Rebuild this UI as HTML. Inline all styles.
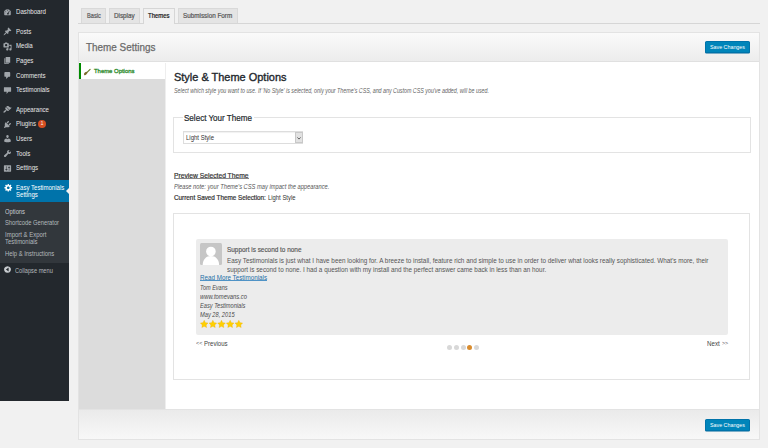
<!DOCTYPE html>
<html><head><meta charset="utf-8">
<style>
*{margin:0;padding:0;box-sizing:border-box}
html,body{width:768px;height:448px;overflow:hidden;background:#f1f1f1;font-family:"Liberation Sans",sans-serif}
.a{position:absolute}
.t{position:absolute;white-space:nowrap;line-height:0;transform-origin:0 0}
.ic{position:absolute;left:3.2px;width:9px;height:9px;fill:#a0a5aa}
</style></head><body>

<div class="a" style="left:0px;top:0px;width:69px;height:401px;background:#23282d"></div>
<div class="t" style="left:15.8px;top:12.00px;font-size:6.8px;color:#e6e6e6;transform:scaleX(0.9)">Dashboard</div>
<div class="t" style="left:15.8px;top:32.00px;font-size:6.8px;color:#e6e6e6;transform:scaleX(0.9)">Posts</div>
<div class="t" style="left:15.8px;top:46.00px;font-size:6.8px;color:#e6e6e6;transform:scaleX(0.9)">Media</div>
<div class="t" style="left:15.8px;top:61.00px;font-size:6.8px;color:#e6e6e6;transform:scaleX(0.9)">Pages</div>
<div class="t" style="left:15.8px;top:76.00px;font-size:6.8px;color:#e6e6e6;transform:scaleX(0.9)">Comments</div>
<div class="t" style="left:15.8px;top:90.00px;font-size:6.8px;color:#e6e6e6;transform:scaleX(0.9)">Testimonials</div>
<div class="t" style="left:15.8px;top:110.00px;font-size:6.8px;color:#e6e6e6;transform:scaleX(0.9)">Appearance</div>
<div class="t" style="left:15.8px;top:124.00px;font-size:6.8px;color:#e6e6e6;transform:scaleX(0.9)">Plugins</div>
<div class="t" style="left:15.8px;top:139.00px;font-size:6.8px;color:#e6e6e6;transform:scaleX(0.9)">Users</div>
<div class="t" style="left:15.8px;top:154.00px;font-size:6.8px;color:#e6e6e6;transform:scaleX(0.9)">Tools</div>
<div class="t" style="left:15.8px;top:168.00px;font-size:6.8px;color:#e6e6e6;transform:scaleX(0.9)">Settings</div>
<svg class="ic" style="top:7.5px" viewBox="0 0 20 20"><path fill-rule="evenodd" d="M3.76 16h12.48c1.1-1.37 1.76-3.11 1.76-5 0-4.42-3.58-8-8-8s-8 3.58-8 8c0 1.89.66 3.63 1.76 5zM10 4c.55 0 1 .45 1 1s-.45 1-1 1-1-.45-1-1 .45-1 1-1zM6 6c.55 0 1 .45 1 1s-.45 1-1 1-1-.45-1-1 .45-1 1-1zm8.69.75l-2.14 4.71c.28.33.45.76.45 1.24 0 1.1-.9 2-2 2s-2-.9-2-2 .9-2 2-2c.13 0 .26.01.38.04l2.14-4.71c.27-.27.71-.27.98 0 .28.27.28.71.19.72zM4 10c.55 0 1 .45 1 1s-.45 1-1 1-1-.45-1-1 .45-1 1-1zm12 0c.55 0 1 .45 1 1s-.45 1-1 1-1-.45-1-1 .45-1 1-1z"/></svg>
<svg class="ic" style="top:27.0px" viewBox="0 0 20 20"><path d="M10.44 3.02l1.82-1.82 6.36 6.35-1.83 1.82c-1.05-.68-2.48-.57-3.41.36l-.75.75c-.92.93-1.04 2.35-.35 3.41l-1.83 1.82-2.41-2.41-2.8 2.79c-.42.42-3.38 2.71-3.8 2.29s1.86-3.39 2.28-3.81l2.79-2.79L4.1 9.36l1.83-1.82c1.05.69 2.48.57 3.4-.36l.75-.75c.93-.92 1.05-2.35.36-3.41z"/></svg>
<svg class="ic" style="top:41.6px" viewBox="0 0 20 20"><path fill-rule="evenodd" d="M13 11V4c0-.55-.45-1-1-1h-1.67L9 1H5L3.67 3H2c-.55 0-1 .45-1 1v7c0 .55.45 1 1 1h10c.55 0 1-.45 1-1zM7 4.5c1.38 0 2.5 1.12 2.5 2.5S8.38 9.5 7 9.5 4.5 8.38 4.5 7 5.62 4.5 7 4.5zM14 6h5v10.5c0 1.38-1.12 2.5-2.5 2.5S14 17.88 14 16.5s1.12-2.5 2.5-2.5c.17 0 .34.02.5.05V9h-3V6zm-4 8.05V13h2v3.5c0 1.38-1.12 2.5-2.5 2.5S7 17.880 7 16.5 8.12 14 9.5 14c.17 0 .34.02.5.05z"/></svg>
<svg class="ic" style="top:56.2px" viewBox="0 0 20 20"><path d="M6 15V2h10v13H6zm-1 1h8v2H3V5h2v11z"/></svg>
<svg class="ic" style="top:70.9px" viewBox="0 0 20 20"><path d="M5 2h9c1.1 0 2 .9 2 2v7c0 1.1-.9 2-2 2h-2l-5 5v-5H5c-1.1 0-2-.9-2-2V4c0-1.1.9-2 2-2z"/></svg>
<svg class="ic" style="top:85.5px" viewBox="0 0 20 20"><path d="M3 3h14c.6 0 1 .4 1 1v8c0 .6-.4 1-1 1h-5l-4 5v-5H3c-.6 0-1-.4-1-1V4c0-.6.4-1 1-1z"/></svg>
<svg class="ic" style="top:105.0px" viewBox="0 0 20 20"><path d="M14.48 11.06L7.41 3.99l1.5-1.5c.5-.56 2.3-.47 3.51.32 1.21.8 1.43 1.28 2.91 2.1 1.18.64 2.45 1.26 4.45.85zm-.71.71L6.7 4.7 4.93 6.47c-.39.39-.39 1.02 0 1.41l1.06 1.06c.39.39.39 1.03 0 1.42-.6.6-1.43 1.11-2.21 1.690-.35.26-.7.53-1.01.84C1.43 14.23.4 16.08 1.2 16.89c.8.8 2.66-.23 4.02-1.58.31-.31.58-.66.85-1.02.57-.78 1.08-1.61 1.69-2.21.39-.39 1.02-.39 1.41 0l1.06 1.06c.39.39 1.02.39 1.41 0z"/></svg>
<svg class="ic" style="top:119.6px" viewBox="0 0 20 20"><path d="M13.11 4.36L9.87 7.6 8 5.73l3.24-3.24c.35-.34 1.05-.2 1.56.32.52.51.66 1.21.31 1.55zm-8 1.77l.91-1.12 9.01 9.01-1.19.84c-.71.71-2.63 1.16-3.82 1.16H6.14L4.9 17.26c-.59.59-1.54.59-2.12 0-.59-.58-.59-1.53 0-2.12l1.24-1.24v-3.88c0-1.13.4-3.19 1.09-3.89zm7.26 3.97l3.24-3.24c.34-.35 1.04-.21 1.55.31.52.51.66 1.21.31 1.55l-3.24 3.25z"/></svg>
<svg class="ic" style="top:134.2px" viewBox="0 0 20 20"><path d="M10 9.25c-2.27 0-2.73-3.44-2.73-3.44C7 4.02 7.82 2 9.97 2c2.16 0 2.98 2.02 2.71 3.81 0 0-.41 3.44-2.68 3.44zm0 2.57L12.72 10c2.39 0 4.52 2.33 4.52 4.53v2.49s-3.65 1.13-7.24 1.13c-3.65 0-7.24-1.13-7.24-1.130v-2.49c0-2.25 1.94-4.48 4.47-4.48z"/></svg>
<svg class="ic" style="top:148.9px" viewBox="0 0 20 20"><path d="M16.68 9.77c-1.34 1.34-3.3 1.67-4.95.99l-5.41 6.52c-.99.99-2.59.99-3.58 0s-.99-2.59 0-3.57l6.52-5.42c-.68-1.65-.35-3.61.99-4.95 1.28-1.28 3.12-1.62 4.72-1.06l-2.89 2.89 2.82 2.82 2.86-2.87c.53 1.58.18 3.39-1.08 4.65z"/></svg>
<svg class="ic" style="top:163.5px" viewBox="0 0 20 20"><path fill-rule="evenodd" d="M18 16V4c0-.55-.45-1-1-1H3c-.55 0-1 .45-1 1v12c0 .55.45 1 1 1h14c.55 0 1-.45 1-1zM8 11h1c.55 0 1 .45 1 1s-.45 1-1 1H8v1.5c0 .28-.22.5-.5.5s-.5-.22-.5-.5V13H6c-.55 0-1-.45-1-1s.45-1 1-1h1V5.5c0-.28.22-.5.5-.5s.5.22.5.5V11zm5-2h-1c-.55 0-1-.45-1-1s.45-1 1-1h1V5.5c0-.28.22-.5.5-.5s.5.22.5.5V7h1c.55 0 1 .45 1 1s-.45 1-1 1h-1v5.5c0 .28-.22.5-.5.5s-.5-.22-.5-.5V9z"/></svg>
<div class="a" style="left:38px;top:120.1px;width:7.9px;height:7.9px;background:#d54e21;border-radius:50%"></div>
<div class="t" style="left:40.8px;top:124.00px;font-size:4.6px;color:#fff;">1</div>
<div class="a" style="left:0px;top:180px;width:69px;height:22px;background:#0073aa"></div>
<div class="t" style="left:15.8px;top:188.00px;font-size:6.8px;color:#fff;transform:scaleX(0.89)">Easy Testimonials</div>
<div class="t" style="left:15.8px;top:195.00px;font-size:6.8px;color:#fff;transform:scaleX(0.89)">Settings</div>
<svg class="ic" style="top:183px;left:3.6px;fill:#fff" viewBox="0 0 20 20"><path fill-rule="evenodd" d="M18 12h-2.18c-.17.7-.44 1.35-.81 1.93l1.54 1.54-2.1 2.1-1.54-1.54c-.58.36-1.23.63-1.91.79V19H8v-2.18c-.68-.16-1.33-.43-1.91-.79l-1.54 1.54-2.12-2.12 1.54-1.54c-.36-.58-.63-1.23-.79-1.91H1V9.03h2.17c.16-.7.44-1.35.8-1.94L2.43 5.550l2.1-2.1 1.54 1.54c.58-.37 1.24-.64 1.93-.81V2h3v2.18c.68.16 1.33.43 1.91.79l1.54-1.54 2.12 2.12-1.54 1.54c.36.59.64 1.24.8 1.94H18V12zm-8.5 1.5c1.66 0 3-1.34 3-3s-1.34-3-3-3-3 1.34-3 3 1.34 3 3 3z"/></svg>
<svg class="a" style="left:65.5px;top:186.5px;width:4px;height:8px"><path d="M4 0L0 4 4 8z" fill="#f1f1f1"/></svg>
<div class="a" style="left:0px;top:202px;width:69px;height:60.5px;background:#32373c"></div>
<div class="t" style="left:5.2px;top:212.00px;font-size:6.5px;color:#c8cdd2;transform:scaleX(0.893);">Options</div>
<div class="t" style="left:5.2px;top:223.00px;font-size:6.5px;color:#b4b9be;transform:scaleX(0.890);">Shortcode Generator</div>
<div class="t" style="left:5.2px;top:235.00px;font-size:6.5px;color:#b4b9be;transform:scaleX(0.919);">Import &amp; Export</div>
<div class="t" style="left:5.2px;top:242.00px;font-size:6.5px;color:#b4b9be;transform:scaleX(0.909);">Testimonials</div>
<div class="t" style="left:5.2px;top:254.00px;font-size:6.5px;color:#b4b9be;transform:scaleX(0.902);">Help &amp; Instructions</div>
<svg class="ic" style="top:265.4px;fill:#c8ccd0" viewBox="0 0 20 20"><path fill-rule="evenodd" d="M10 2.5a7.5 7.5 0 1 0 0.01 0zM12.5 14.5l-6-4.5 6-4.5z"/></svg>
<div class="t" style="left:15px;top:271.00px;font-size:6.5px;color:#b4b9be;transform:scaleX(0.872);">Collapse menu</div>
<div class="a" style="left:78px;top:23px;width:682px;height:1px;background:#d6d6d6"></div>
<div class="a" style="left:81px;top:8px;width:25px;height:15px;background:#e4e4e4;border:1px solid #d9d9d9;border-bottom:none"></div>
<div class="t" style="left:86.6px;top:16.00px;font-size:6.6px;color:#555;transform:scaleX(0.855);-webkit-text-stroke:0.2px #555">Basic</div>
<div class="a" style="left:109px;top:8px;width:31px;height:15px;background:#e4e4e4;border:1px solid #d9d9d9;border-bottom:none"></div>
<div class="t" style="left:114.15px;top:16.00px;font-size:6.6px;color:#555;transform:scaleX(0.957);-webkit-text-stroke:0.2px #555">Display</div>
<div class="a" style="left:142.5px;top:7.5px;width:32.0px;height:16.5px;background:#f1f1f1;border:1px solid #d6d6d6;border-bottom:none"></div>
<div class="t" style="left:147.75px;top:16.00px;font-size:6.6px;color:#111;transform:scaleX(0.902);-webkit-text-stroke:0.2px #111">Themes</div>
<div class="a" style="left:178px;top:8px;width:60px;height:15px;background:#e4e4e4;border:1px solid #d9d9d9;border-bottom:none"></div>
<div class="t" style="left:183.4px;top:16.00px;font-size:6.6px;color:#555;transform:scaleX(0.958);-webkit-text-stroke:0.2px #555">Submission Form</div>
<div class="a" style="left:78px;top:31.6px;width:682px;height:408px;background:#fff;border:1px solid #e3e3e3"></div>
<div class="a" style="left:79px;top:32.6px;width:680px;height:29.9px;background:linear-gradient(#fafafa,#ececec);border-bottom:1px solid #e0e0e0"></div>
<div class="t" style="left:86.3px;top:47.00px;font-size:10.6px;color:#6a6a6a;transform:scaleX(0.936);-webkit-text-stroke:0.25px #6a6a6a">Theme Settings</div>
<div class="a" style="left:705px;top:40.8px;width:45px;height:12.2px;background:#0085ba;border:1px solid #0073aa;border-radius:1.5px;box-shadow:0 0.5px 0 #006799"></div>
<div class="t" style="left:710px;top:47.00px;font-size:6.2px;color:#fff;transform:scaleX(0.861);">Save Changes</div>
<div class="a" style="left:79px;top:62.5px;width:86px;height:346.5px;background:#dcdcdc"></div>
<div class="a" style="left:79px;top:63px;width:86px;height:16px;background:#fff"></div>
<div class="a" style="left:165px;top:62.5px;width:1px;height:346.5px;background:#eeeeee"></div>
<div class="a" style="left:79px;top:63px;width:2px;height:16px;background:#008a00"></div>
<div class="t" style="left:94.3px;top:71.00px;font-size:6.1px;color:#2a8a2a;transform:scaleX(0.971);-webkit-text-stroke:0.3px #2a8a2a">Theme Options</div>
<svg class="a" style="left:83px;top:68px;width:8px;height:8px" viewBox="0 0 8 8"><path d="M7.1 1.4L4.3 4.2" stroke="#6a7a2a" stroke-width="1.2" stroke-linecap="round"/><ellipse cx="2.7" cy="5.4" rx="2.1" ry="1.15" transform="rotate(-45 2.7 5.4)" fill="#7a6a2a"/></svg>
<div class="t" style="left:173.8px;top:77.00px;font-size:10.8px;color:#23282d;transform:scaleX(1.015);-webkit-text-stroke:0.35px #23282d">Style &amp; Theme Options</div>
<div class="t" style="left:173.8px;top:91.00px;font-size:6.4px;color:#5f5f5f;font-style:italic;transform:scaleX(0.832);">Select which style you want to use. If 'No Style' is selected, only your Theme's CSS, and any Custom CSS you've added, will be used.</div>
<div class="a" style="left:173px;top:117px;width:578px;height:36.3px;border:1px solid #e3e3e3"></div>
<div class="a" style="left:182.5px;top:112px;width:71px;height:10px;background:#fff"></div>
<div class="t" style="left:183.9px;top:118.00px;font-size:8.8px;color:#23282d;transform:scaleX(0.916);-webkit-text-stroke:0.2px #23282d">Select Your Theme</div>
<div class="a" style="left:183px;top:131.3px;width:120px;height:12.3px;background:#fff;border:1px solid #ddd;box-shadow:inset 0 1px 1px rgba(0,0,0,.06)"></div>
<div class="a" style="left:295px;top:132px;width:7.8px;height:11.4px;background:#e2e2e2;border:1px solid #c8c8c8"></div>
<svg class="a" style="left:296.9px;top:137.2px;width:4px;height:3px"><path d="M0.4 0.4L2 2.1 3.6 0.4" stroke="#555" stroke-width="0.9" fill="none"/></svg>
<div class="t" style="left:186px;top:138.00px;font-size:6.4px;color:#333;transform:scaleX(0.937);">Light Style</div>
<div class="t" style="left:173.8px;top:176.00px;font-size:7.0px;color:#333;transform:scaleX(0.959);-webkit-text-stroke:0.2px #333">Preview Selected Theme</div>
<div class="a" style="left:173.8px;top:178.1px;width:75px;height:0.8px;background:#888"></div>
<div class="t" style="left:173.8px;top:187.00px;font-size:6.4px;color:#555;font-style:italic;transform:scaleX(0.897);">Please note: your Theme's CSS may impact the appearance.</div>
<div class="t" style="left:173.8px;top:198.00px;font-size:6.4px;color:#333;transform:scaleX(0.992);-webkit-text-stroke:0.2px #333">Current Saved Theme Selection:</div>
<div class="t" style="left:267.8px;top:198.00px;font-size:6.4px;color:#333;transform:scaleX(0.920);">Light Style</div>
<div class="a" style="left:173px;top:212.5px;width:577.3px;height:167.2px;border:1px solid #e3e3e3"></div>
<div class="a" style="left:195.5px;top:239px;width:532.5px;height:96px;background:#ececec;border-radius:2px"></div>
<svg class="a" style="left:200px;top:243.3px;width:22px;height:22px"><rect width="22" height="22" rx="1.5" fill="#c6c6c6"/><circle cx="10.9" cy="8.5" r="4.8" fill="#fff"/><path d="M2.7 22C2.7 16.5 6.2 13.1 10.9 13.1S19.1 16.5 19.1 22z" fill="#fff"/></svg>
<div class="t" style="left:226.7px;top:250.00px;font-size:6.8px;color:#555;transform:scaleX(0.943);-webkit-text-stroke:0.15px #555">Support is second to none</div>
<div class="t" style="left:226.7px;top:261.00px;font-size:6.6px;color:#555;transform:scaleX(0.960);">Easy Testimonials is just what I have been looking for. A breeze to install, feature rich and simple to use in order to deliver what looks really sophisticated. What’s more, their</div>
<div class="t" style="left:226.7px;top:270.00px;font-size:6.6px;color:#555;transform:scaleX(0.960);">support is second to none. I had a question with my install and the perfect answer came back in less than an hour.</div>
<div class="t" style="left:200px;top:278.00px;font-size:6.5px;color:#1f6fa6;transform:scaleX(0.963);">Read More Testimonials</div>
<div class="a" style="left:200px;top:280.2px;width:67.3px;height:0.8px;background:#4f93c6"></div>
<div class="t" style="left:200.2px;top:288.00px;font-size:6.6px;color:#4a4a4a;font-style:italic;transform:scaleX(0.842);">Tom Evans</div>
<div class="t" style="left:200.2px;top:297.00px;font-size:6.6px;color:#4a4a4a;font-style:italic;transform:scaleX(0.884);">www.tomevans.co</div>
<div class="t" style="left:200.2px;top:306.00px;font-size:6.6px;color:#4a4a4a;font-style:italic;transform:scaleX(0.857);">Easy Testimonials</div>
<div class="t" style="left:200.2px;top:315.00px;font-size:6.6px;color:#4a4a4a;font-style:italic;transform:scaleX(0.865);">May 28, 2015</div>
<svg class="a" style="left:199.7px;top:320.3px;width:44px;height:9px"><path transform="translate(4.20,4.3)" d="M0.00 -4.00L1.20 -1.66L3.80 -1.24L1.95 0.63L2.35 3.24L0.00 2.05L-2.35 3.24L-1.95 0.63L-3.80 -1.24L-1.20 -1.66z" fill="#ffd000" stroke="#eeaa00" stroke-width="0.35" stroke-linejoin="round"/><path transform="translate(12.85,4.3)" d="M0.00 -4.00L1.20 -1.66L3.80 -1.24L1.95 0.63L2.35 3.24L0.00 2.05L-2.35 3.24L-1.95 0.63L-3.80 -1.24L-1.20 -1.66z" fill="#ffd000" stroke="#eeaa00" stroke-width="0.35" stroke-linejoin="round"/><path transform="translate(21.50,4.3)" d="M0.00 -4.00L1.20 -1.66L3.80 -1.24L1.95 0.63L2.35 3.24L0.00 2.05L-2.35 3.24L-1.95 0.63L-3.80 -1.24L-1.20 -1.66z" fill="#ffd000" stroke="#eeaa00" stroke-width="0.35" stroke-linejoin="round"/><path transform="translate(30.15,4.3)" d="M0.00 -4.00L1.20 -1.66L3.80 -1.24L1.95 0.63L2.35 3.24L0.00 2.05L-2.35 3.24L-1.95 0.63L-3.80 -1.24L-1.20 -1.66z" fill="#ffd000" stroke="#eeaa00" stroke-width="0.35" stroke-linejoin="round"/><path transform="translate(38.80,4.3)" d="M0.00 -4.00L1.20 -1.66L3.80 -1.24L1.95 0.63L2.35 3.24L0.00 2.05L-2.35 3.24L-1.95 0.63L-3.80 -1.24L-1.20 -1.66z" fill="#ffd000" stroke="#eeaa00" stroke-width="0.35" stroke-linejoin="round"/></svg>
<div class="t" style="left:195.8px;top:344.00px;font-size:4.8px;color:#555;transform:scaleX(1.142);">&lt;&lt;</div>
<div class="t" style="left:204.3px;top:344.00px;font-size:6.6px;color:#444;transform:scaleX(0.919);">Previous</div>
<div class="t" style="left:707.2px;top:344.00px;font-size:6.6px;color:#444;transform:scaleX(0.943);">Next</div>
<div class="t" style="left:721.8px;top:344.00px;font-size:4.8px;color:#555;transform:scaleX(1.106);">&gt;&gt;</div>
<div class="a" style="left:446.7px;top:344.5px;width:5px;height:5px;background:#d8d8d8;border-radius:50%"></div>
<div class="a" style="left:453.6px;top:344.5px;width:5px;height:5px;background:#d8d8d8;border-radius:50%"></div>
<div class="a" style="left:460.5px;top:344.5px;width:5px;height:5px;background:#d8d8d8;border-radius:50%"></div>
<div class="a" style="left:467.4px;top:344.5px;width:5px;height:5px;background:#d98c2e;border-radius:50%"></div>
<div class="a" style="left:474.3px;top:344.5px;width:5px;height:5px;background:#d8d8d8;border-radius:50%"></div>
<div class="a" style="left:79px;top:409px;width:680px;height:30px;background:linear-gradient(#eaeaea,#f8f8f8);border-top:1px solid #e3e3e3"></div>
<div class="a" style="left:705px;top:419px;width:45px;height:12.2px;background:#0085ba;border:1px solid #0073aa;border-radius:1.5px;box-shadow:0 0.5px 0 #006799"></div>
<div class="t" style="left:710px;top:425.00px;font-size:6.2px;color:#fff;transform:scaleX(0.861);">Save Changes</div>
</body></html>
